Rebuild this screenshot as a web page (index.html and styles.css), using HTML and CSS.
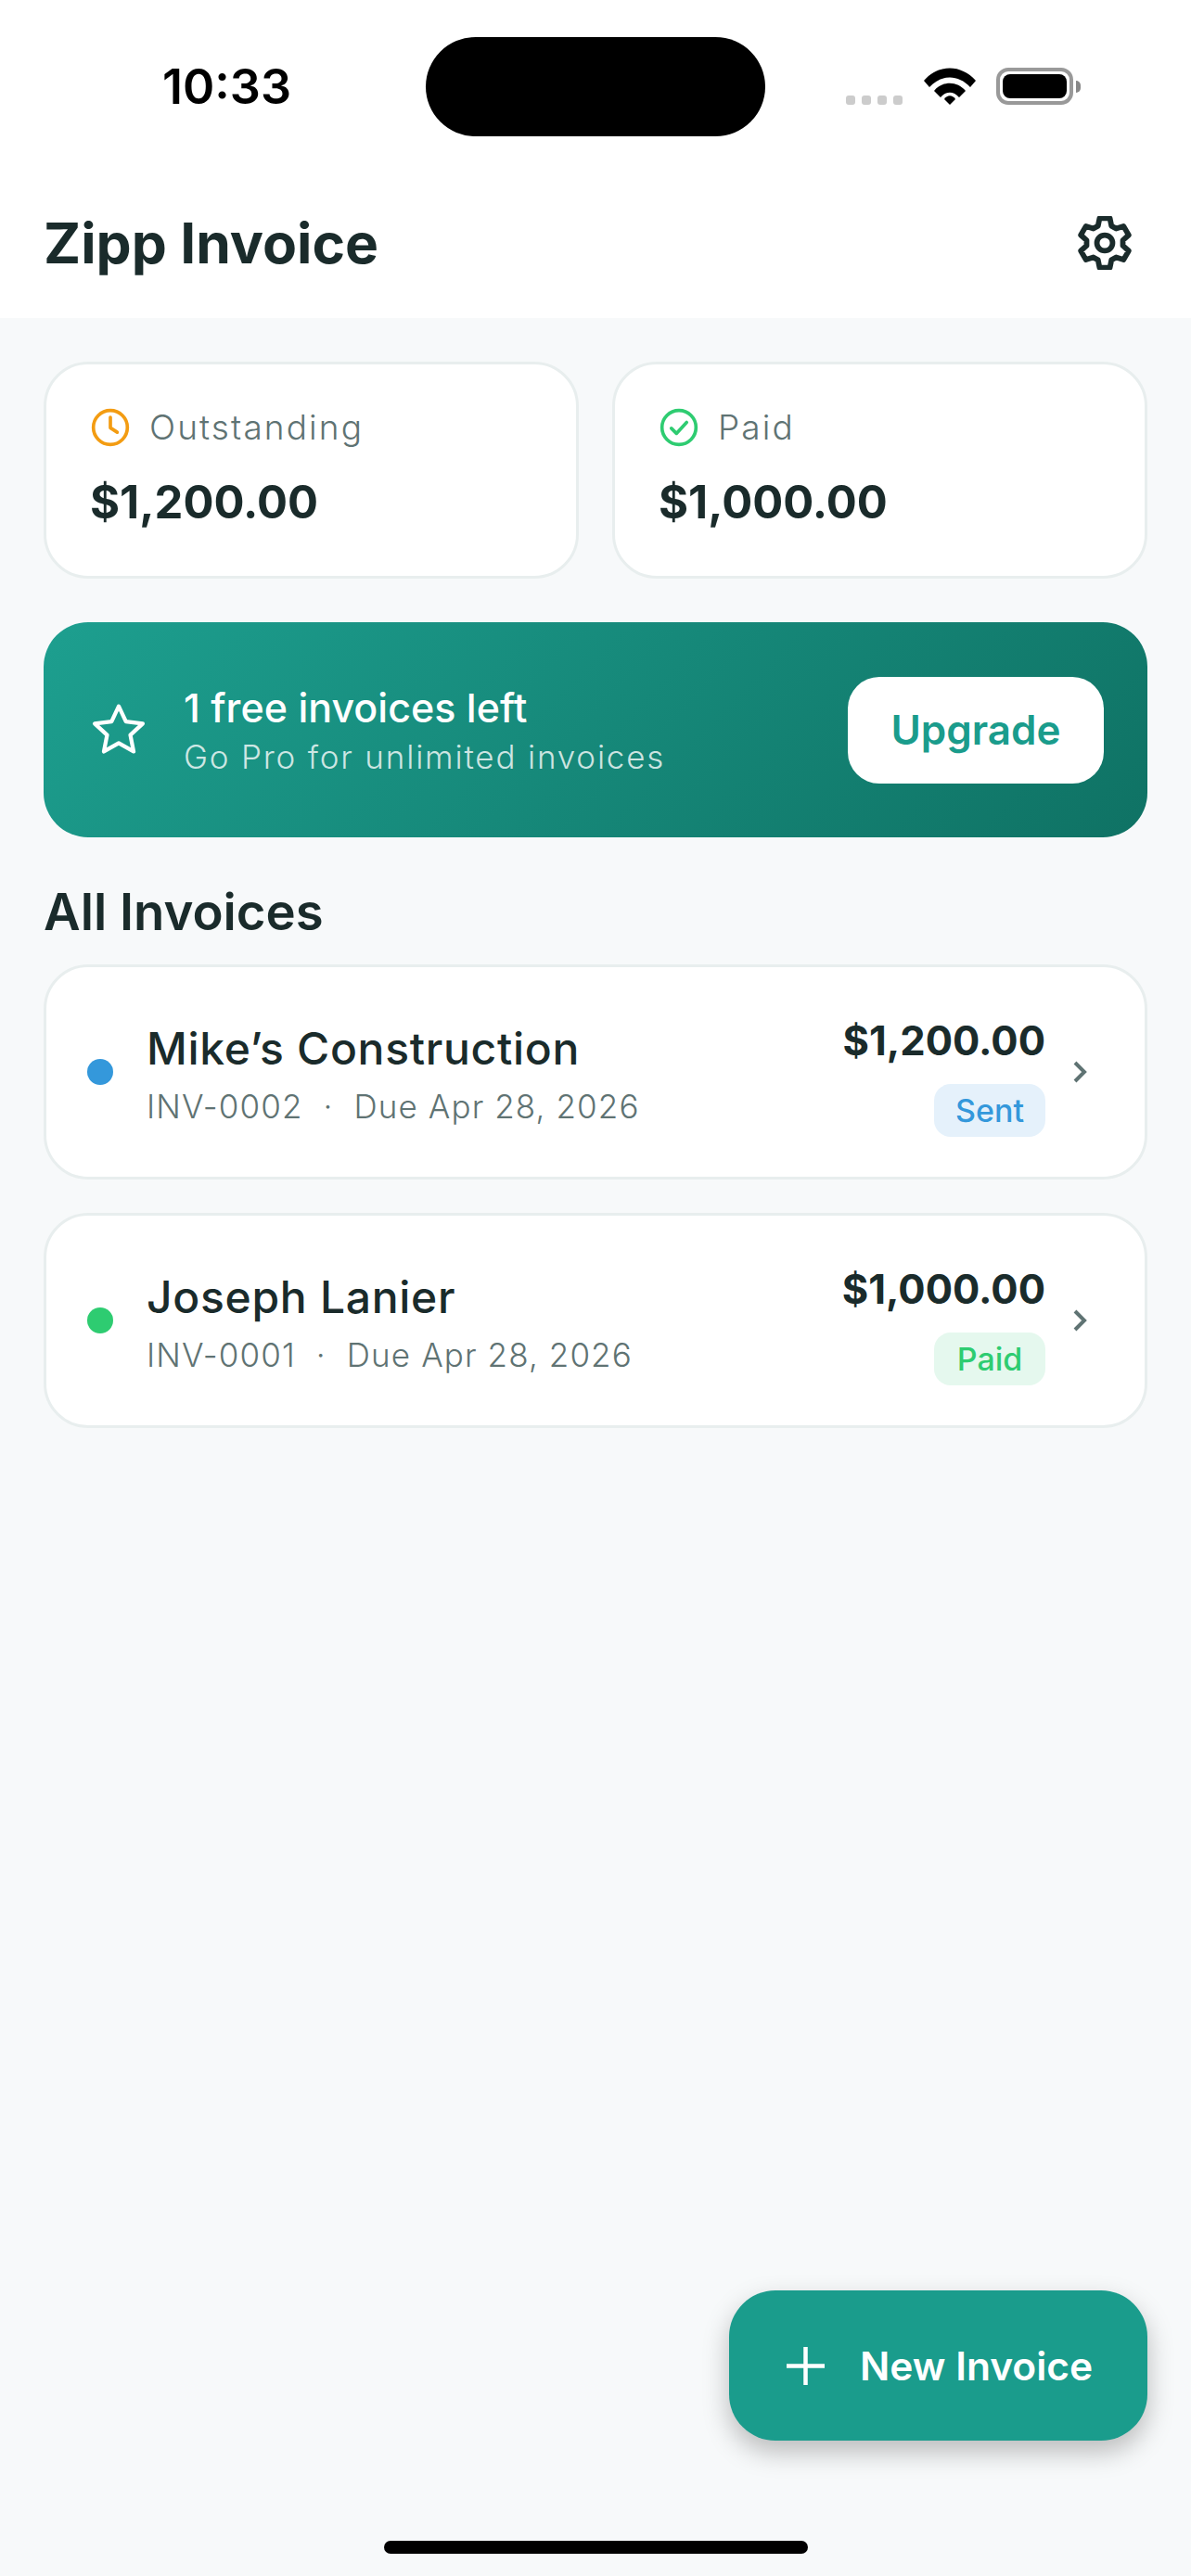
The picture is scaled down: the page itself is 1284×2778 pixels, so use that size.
FILE: index.html
```html
<!DOCTYPE html>
<html lang="en">
<head>
<meta charset="UTF-8" />
<meta name="viewport" content="width=device-width, initial-scale=1" />
<title>Zipp Invoice</title>
<link rel="stylesheet" href="styles.css">
</head>
<body>
  <div class="phone">
    <!-- status bar -->
    <div class="status-bar">
      <span class="time">10:33</span>
      <div class="island"></div>
      <div class="status-icons">
        <div class="signal"><i></i><i></i><i></i><i></i></div>
        <svg class="wifi" viewBox="0 0 56 40" aria-hidden="true">
          <path d="M0 14 C16 -4 40 -4 56 14 L50 21 C37 7 19 7 6 21 Z" />
          <path d="M11 25 C20 14 36 14 45 25 L38 32 C32 25 24 25 18 32 Z" />
          <path d="M22 34 C25 29 31 29 34 34 L28 40 Z" />
        </svg>
        <div class="battery"><div class="battery-fill"></div></div>
        <div class="battery-cap"></div>
      </div>
    </div>

    <header class="app-header">
      <h1>Zipp Invoice</h1>
      <svg class="gear" viewBox="0 0 24 24" aria-label="Settings">
        <path d="M9 4.4 9.7 1 14.3 1 15 4.4 17.08 5.6 20.38 4.51 22.68 8.49 20.08 10.8 20.08 13.2 22.68 15.51 20.38 19.49 17.08 18.4 15 19.6 14.3 23 9.7 23 9 19.6 6.92 18.4 3.62 19.49 1.32 15.51 3.92 13.2 3.92 10.8 1.32 8.49 3.62 4.51 6.92 5.6Z" />
        <circle cx="12" cy="12" r="3.5" />
      </svg>
    </header>

    <main class="content">
      <section class="stats">
        <div class="stat-card">
          <div class="stat-label">
            <svg class="stat-icon clock" viewBox="0 0 24 24" aria-hidden="true">
              <circle cx="12" cy="12" r="10" />
              <path d="M12 6v6.2l4 2.6" />
            </svg>
            <span>Outstanding</span>
          </div>
          <div class="stat-value">$1,200.00</div>
        </div>
        <div class="stat-card">
          <div class="stat-label">
            <svg class="stat-icon check" viewBox="0 0 24 24" aria-hidden="true">
              <circle cx="12" cy="12" r="10" />
              <path d="M7.5 12.5l3 3 6-6.5" />
            </svg>
            <span>Paid</span>
          </div>
          <div class="stat-value">$1,000.00</div>
        </div>
      </section>

      <section class="promo">
        <svg class="star" viewBox="0 0 24 24" aria-hidden="true">
          <path d="M12 2.5l2.9 6.2 6.8.8-5 4.6 1.3 6.7-6-3.4-6 3.4 1.3-6.7-5-4.6 6.8-.8z" />
        </svg>
        <div class="promo-text">
          <div class="promo-title">1 free invoices left</div>
          <div class="promo-sub">Go Pro for unlimited invoices</div>
        </div>
        <div class="upgrade">Upgrade</div>
      </section>

      <h2 class="section-title">All Invoices</h2>

      <section class="invoice-list">
        <div class="invoice">
          <span class="dot dot-sent"></span>
          <div class="invoice-info">
            <div class="invoice-name">Mike’s Construction</div>
            <div class="invoice-meta"><span>INV-0002</span><span>·</span><span>Due Apr 28, 2026</span></div>
          </div>
          <div class="invoice-side">
            <div class="invoice-amount">$1,200.00</div>
            <span class="badge badge-sent">Sent</span>
          </div>
          <svg class="chevron" viewBox="0 0 18 26" aria-hidden="true"><path d="M3 3l10 10-10 10" /></svg>
        </div>
        <div class="invoice">
          <span class="dot dot-paid"></span>
          <div class="invoice-info">
            <div class="invoice-name">Joseph Lanier</div>
            <div class="invoice-meta"><span>INV-0001</span><span>·</span><span>Due Apr 28, 2026</span></div>
          </div>
          <div class="invoice-side">
            <div class="invoice-amount">$1,000.00</div>
            <span class="badge badge-paid">Paid</span>
          </div>
          <svg class="chevron" viewBox="0 0 18 26" aria-hidden="true"><path d="M3 3l10 10-10 10" /></svg>
        </div>
      </section>
    </main>

    <div class="fab">
      <svg class="plus" viewBox="0 0 41 41" aria-hidden="true"><path d="M20.5 0v41M0 20.5h41" /></svg>
      <span>New Invoice</span>
    </div>

    <div class="home-bar"></div>
  </div>
</body>
</html>
```

FILE: styles.css
```css
:root {
  --color-bg: #f7f9fa;
  --color-border: #e8eeee;
  --color-text: #1a2b2b;
  --color-muted: #5f7373;
  --color-teal: #1a9c8c;
  --color-blue: #3498db;
  --color-green: #2ecc71;
  --font-family: Inter, "Noto Sans", sans-serif;
}

* {
  box-sizing: border-box;
}

body {
  margin: 0;
  background: var(--color-bg);
  font-family: var(--font-family);
  color: var(--color-text);
}

.phone {
  position: relative;
  width: 1284px;
  height: 2778px;
  overflow: hidden;
  background: var(--color-bg);
}

/* status bar */
.status-bar {
  height: 190px;
  background: #fff;
  display: flex;
  align-items: flex-start;
  padding-top: 40px;
}

.time {
  width: 459px;
  padding-left: 175px;
  margin-top: 26px;
  font-size: 52px;
  line-height: 56px;
  font-weight: 600;
  color: #000;
}

.island {
  width: 366px;
  height: 107px;
  border-radius: 54px;
  background: #000;
}

.status-icons {
  display: flex;
  align-items: flex-end;
  margin-left: 87px;
  margin-top: 33px;
}

.signal {
  display: flex;
  gap: 7px;
  margin-right: 23px;
}

.signal i {
  width: 10px;
  height: 10px;
  border-radius: 3px;
  background: #ccc;
}

.wifi {
  width: 56px;
  height: 40px;
  margin-right: 22px;
  fill: #000;
}

.battery {
  width: 83px;
  height: 40px;
  border: 4px solid #999;
  border-radius: 13px;
  padding: 3px;
}

.battery-fill {
  height: 100%;
  background: #000;
  border-radius: 8px;
}

.battery-cap {
  width: 5px;
  height: 13px;
  margin: 0 0 13px 3px;
  border-radius: 0 6px 6px 0;
  background: #888;
}

/* header */
.app-header {
  height: 153px;
  background: #fff;
  display: flex;
  align-items: flex-start;
  justify-content: space-between;
  padding: 36px 64px 0 47px;
}

.app-header h1 {
  margin: 0;
  font-size: 60.5px;
  line-height: 72px;
  font-weight: 700;
}

.gear {
  width: 58px;
  height: 58px;
  margin-top: 7px;
  fill: none;
  stroke: var(--color-text);
  stroke-width: 2.4;
  stroke-linejoin: round;
}

.content {
  padding: 47px 47px 0;
}

/* summary cards */
.stats {
  display: grid;
  grid-template-columns: 1fr 1fr;
  gap: 36px;
}

.stat-card {
  height: 234px;
  background: #fff;
  border: 3px solid var(--color-border);
  border-radius: 48px;
  padding: 46px 47px 0;
}

.stat-label {
  display: flex;
  align-items: center;
  gap: 20px;
  font-size: 37px;
  line-height: 44px;
  font-weight: 300;
  color: var(--color-muted);
  letter-spacing: 2.1px;
}

.stat-icon {
  width: 44px;
  height: 44px;
  fill: none;
  stroke-width: 2;
  stroke-linecap: round;
  stroke-linejoin: round;
}

.clock {
  stroke: #f39c12;
}

.check {
  stroke: var(--color-green);
}

.stat-value {
  margin-top: 27px;
  font-size: 49px;
  line-height: 64px;
  font-weight: 700;
}

/* upgrade banner */
.promo {
  height: 232px;
  margin-top: 47px;
  border-radius: 48px;
  background: linear-gradient(135deg, #1d9f8f, #0f7264);
  display: flex;
  align-items: center;
  padding: 0 47px 0 49px;
  color: #fff;
}

.star {
  width: 64px;
  height: 64px;
  fill: none;
  stroke: #fff;
  stroke-width: 1.6;
  stroke-linejoin: round;
}

.promo-text {
  flex: 1;
  margin-left: 38px;
  margin-top: 0;
}

.promo-title {
  font-size: 43px;
  line-height: 56px;
  font-weight: 500;
}

.promo-sub {
  margin-top: 2px;
  font-size: 35px;
  line-height: 46px;
  font-weight: 300;
  letter-spacing: 1.8px;
  color: rgba(255, 255, 255, 0.78);
}

.upgrade {
  width: 276px;
  height: 115px;
  border-radius: 34px;
  background: #fff;
  color: var(--color-teal);
  font-size: 44px;
  font-weight: 600;
  display: flex;
  align-items: center;
  justify-content: center;
}

.section-title {
  margin: 48px 0 0;
  font-size: 54.5px;
  line-height: 64px;
  font-weight: 600;
}

/* invoice rows */
.invoice-list {
  display: flex;
  flex-direction: column;
  gap: 36px;
  margin-top: 25px;
}

.invoice {
  height: 232px;
  background: #fff;
  border: 3px solid var(--color-border);
  border-radius: 48px;
  display: flex;
  align-items: center;
  padding: 0 60px 0 44px;
}

.dot {
  width: 28px;
  height: 28px;
  border-radius: 50%;
  flex: none;
}

.dot-sent {
  background: var(--color-blue);
}

.dot-paid {
  background: var(--color-green);
}

.invoice-info {
  flex: 1;
  margin-left: 36px;
  margin-top: 5px;
}

.invoice-name {
  font-size: 48px;
  line-height: 60px;
  font-weight: 500;
  letter-spacing: 0.7px;
}

.invoice-meta {
  display: flex;
  gap: 22px;
  margin-top: 8px;
  font-size: 35px;
  line-height: 48px;
  font-weight: 300;
  color: var(--color-muted);
  letter-spacing: 1.1px;
}

.invoice-side {
  display: flex;
  flex-direction: column;
  align-items: flex-end;
  gap: 16px;
  margin-top: 4px;
}

.invoice-amount {
  font-size: 43.5px;
  line-height: 62px;
  font-weight: 700;
}

.badge {
  height: 57px;
  width: 120px;
  border-radius: 18px;
  display: flex;
  align-items: center;
  justify-content: center;
  font-size: 34px;
  font-weight: 500;
}

.badge-sent {
  background: #e5f1fb;
  color: var(--color-blue);
}

.badge-paid {
  background: #e5f8ee;
  color: var(--color-green);
}

.chevron {
  width: 18px;
  height: 26px;
  margin-left: 29px;
  fill: none;
  stroke: var(--color-muted);
  stroke-width: 4;
}

/* floating button */
.fab {
  position: absolute;
  left: 786px;
  top: 2470px;
  width: 451px;
  height: 162px;
  border-radius: 50px;
  background: var(--color-teal);
  box-shadow: 0 12px 28px rgba(0, 0, 0, 0.25);
  color: #fff;
  display: flex;
  align-items: center;
  padding-left: 62px;
  gap: 38px;
  font-size: 42.5px;
  font-weight: 600;
}

.plus {
  width: 41px;
  height: 41px;
  fill: none;
  stroke: #fff;
  stroke-width: 4.5;
}

.home-bar {
  position: absolute;
  left: 414px;
  top: 2740px;
  width: 457px;
  height: 14px;
  border-radius: 7px;
  background: #000;
}
```
